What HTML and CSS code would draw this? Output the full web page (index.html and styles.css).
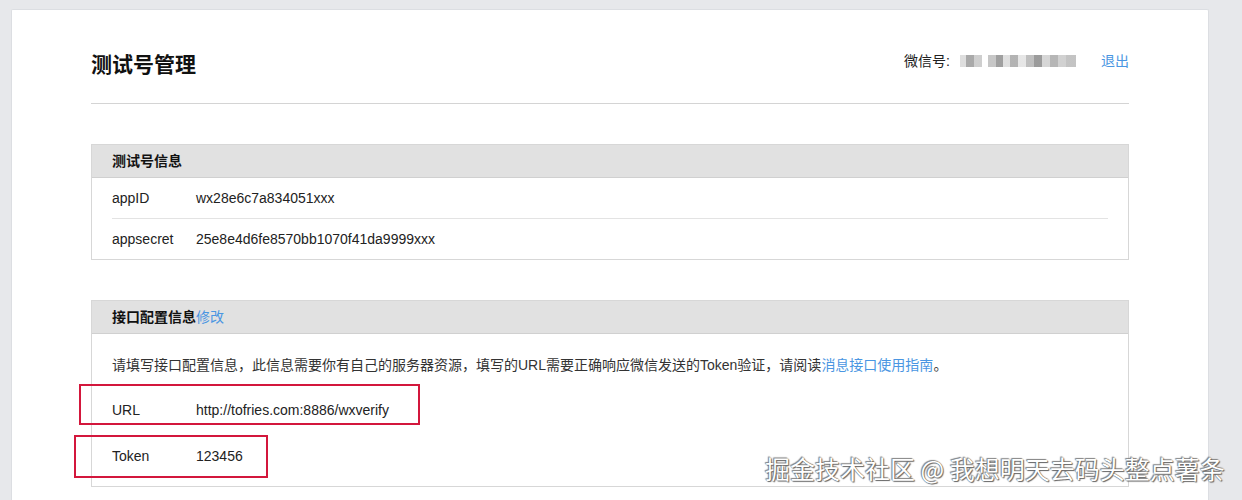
FILE: index.html
```html
<!DOCTYPE html>
<html lang="zh-CN">
<head>
<meta charset="utf-8">
<title>测试号管理</title>
<link rel="stylesheet" href="styles.css">
</head>
<body>
<div class="card">
  <div class="page-head">
    <h1 class="title">测试号管理</h1>
    <div class="account">
      <span class="account-label">微信号:</span>
      <span class="blur-id"></span>
      <a class="link logout">退出</a>
    </div>
  </div>

  <section class="panel panel-info">
    <div class="panel-head">测试号信息</div>
    <div class="panel-body">
      <div class="row row-line"><span class="label">appID</span><span class="value">wx28e6c7a834051xxx</span></div>
      <div class="row"><span class="label">appsecret</span><span class="value">25e8e4d6fe8570bb1070f41da9999xxx</span></div>
    </div>
  </section>

  <section class="panel panel-config">
    <div class="panel-head">接口配置信息<a class="link">修改</a></div>
    <div class="panel-body">
      <p class="desc">请填写接口配置信息，此信息需要你有自己的服务器资源，填写的URL需要正确响应微信发送的Token验证，请阅读<a class="link">消息接口使用指南</a>。</p>
      <div class="row tall"><span class="label">URL</span><span class="value">http://tofries.com:8886/wxverify</span></div>
      <div class="row tall"><span class="label">Token</span><span class="value">123456</span></div>
    </div>
  </section>
</div>

<div class="mark mark-url"></div>
<div class="mark mark-token"></div>
<div class="watermark">掘金技术社区 @ 我想明天去码头整点薯条</div>
</body>
</html>
```

FILE: styles.css
```css
html, body {
  margin: 0;
  padding: 0;
  height: 500px;
  overflow: hidden;
}
body {
  background: #e7e8eb;
  font-family: "Liberation Sans", Arial, "Noto Sans CJK SC", sans-serif;
  font-size: 14px;
  color: #222;
  position: relative;
}
.card {
  margin: 9px 0 0 11px;
  width: 1198px;
  height: 491px;
  background: #fff;
  border: 1px solid #dcdee2;
  border-bottom: none;
  border-radius: 2px 2px 0 0;
  padding: 0 79px;
  box-sizing: border-box;
}
.page-head {
  display: flex;
  justify-content: space-between;
  align-items: flex-start;
  padding-top: 41px;
  padding-bottom: 24px;
  border-bottom: 1px solid #d4d4d4;
}
.title {
  margin: 0;
  font-size: 21px;
  line-height: 28px;
  font-weight: bold;
  color: #111;
}
.account {
  display: flex;
  align-items: center;
  margin-top: 0;
  line-height: 20px;
  color: #222;
}
.account-label {
  margin-right: 10px;
}
.blur-id {
  width: 116px;
  height: 12px;
  background: linear-gradient(90deg,
    #d8d8d8 0 6px, #9a9a9a 6px 14px, #c6c6c6 14px 22px, #fff 22px 28px,
    #bdbdbd 28px 36px, #8f8f8f 36px 43px, #dadada 43px 50px, #a6a6a6 50px 58px,
    #e2e2e2 58px 66px, #b4b4b4 66px 74px, #8a8a8a 74px 82px, #cfcfcf 82px 90px,
    #a9a9a9 90px 98px, #c9c9c9 98px 106px, #b9b9b9 106px 116px);
  opacity: 0.85;
  margin-right: 25px;
}
.link {
  color: #4a96e2;
  text-decoration: none;
  cursor: pointer;
}
.panel {
  border: 1px solid #d7d7d7;
  margin-top: 40px;
}
.panel-head {
  height: 32px;
  line-height: 32px;
  background: #e1e1e1;
  border-bottom: 1px solid #d0d0d0;
  padding: 0 20px;
  font-weight: bold;
  color: #111;
}
.panel-head .link {
  font-weight: normal;
}
.panel-body {
  padding: 0 20px;
}
.row {
  display: flex;
  height: 40px;
  align-items: center;
}
.row-line {
  border-bottom: 1px solid #e3e3e3;
}
.row.tall {
  height: 46px;
}
.label {
  width: 84px;
  flex: none;
}
.desc {
  margin: 0;
  padding: 21px 0 12px;
  line-height: 20px;
  color: #333;
}
.panel-config .panel-body {
  padding-bottom: 7px;
}
.mark {
  position: absolute;
  border: 2px solid #d3173c;
  box-sizing: border-box;
}
.mark-url {
  left: 79px;
  top: 384px;
  width: 341px;
  height: 41px;
}
.mark-token {
  left: 74px;
  top: 435px;
  width: 194px;
  height: 43px;
}
.watermark {
  position: absolute;
  left: 765px;
  top: 453px;
  font-size: 25px;
  line-height: 30px;
  color: #fff;
  white-space: nowrap;
  font-family: "Noto Sans CJK SC", sans-serif;
  text-shadow: 0 0 1px #555, 1px 1px 1px #666, -1px -1px 1px #888;
}
```
